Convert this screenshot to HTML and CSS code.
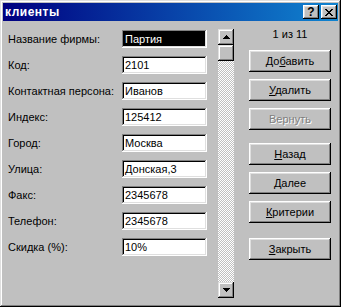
FILE: index.html
```html
<!DOCTYPE html>
<html lang="ru">
<head>
    <meta charset="UTF-8">
    <title>клиенты</title>
    <link rel="stylesheet" href="styles.css">
</head>
<body>
    <!-- Dialog window -->
    <div class="window">
        <div class="titlebar">
            <span class="title">клиенты</span>
            <div class="title-buttons">
                <button class="tbtn help">?</button>
                <button class="tbtn">
                    <svg width="8" height="7" viewBox="0 0 8 7">
                        <path d="M0 0h2v1h1v1h2v-1h1v-1h2v1h-1v1h-1v1h-1v1h1v1h1v1h1v1h-2v-1h-1v-1h-2v1h-1v1h-2v-1h1v-1h1v-1h1v-1h-1v-1h-1v-1h-1z" fill="#000"/>
                    </svg>
                </button>
            </div>
        </div>

        <div class="client">
            <!-- Record fields -->
            <div class="record">
                <span class="label">Название фирмы:</span><div class="field selected">Партия</div>
                <span class="label">Код:</span><div class="field">2101</div>
                <span class="label">Контактная персона:</span><div class="field">Иванов</div>
                <span class="label">Индекс:</span><div class="field">125412</div>
                <span class="label">Город:</span><div class="field">Москва</div>
                <span class="label">Улица:</span><div class="field">Донская,3</div>
                <span class="label">Факс:</span><div class="field">2345678</div>
                <span class="label">Телефон:</span><div class="field">2345678</div>
                <span class="label">Скидка (%):</span><div class="field">10%</div>
            </div>

            <!-- Record scrollbar -->
            <div class="scrollbar">
                <div class="sb-btn">
                    <svg width="7" height="4" viewBox="0 0 7 4"><path d="M3 0h1v1h1v1h1v1h1v1h-7v-1h1v-1h1v-1h1z" fill="#000"/></svg>
                </div>
                <div class="sb-thumb"></div>
                <div class="sb-track"></div>
                <div class="sb-btn">
                    <svg width="7" height="4" viewBox="0 0 7 4"><path d="M0 0h7v1h-1v1h-1v1h-1v1h-1v-1h-1v-1h-1v-1h-1z" fill="#000"/></svg>
                </div>
            </div>

            <!-- Actions -->
            <div class="actions">
                <div class="counter">1 из 11</div>
                <div class="group">
                    <button class="btn">До<u>б</u>авить</button>
                    <button class="btn"><u>У</u>далить</button>
                    <button class="btn disabled">Вернуть</button>
                </div>
                <div class="group">
                    <button class="btn"><u>Н</u>азад</button>
                    <button class="btn"><u>Д</u>алее</button>
                    <button class="btn"><u>К</u>ритерии</button>
                </div>
                <div class="group">
                    <button class="btn"><u>З</u>акрыть</button>
                </div>
            </div>
        </div>
    </div>
</body>
</html>
```

FILE: styles.css
```css
/* Global */
body {
    margin: 0;
    padding: 0;
    background: #c0c0c0;
    font-family: 'Liberation Sans', Arial, sans-serif;
    font-size: 11px;
    color: #000;
}

/* Window frame */
.window {
    width: 341px;
    height: 307px;
    box-sizing: border-box;
    padding: 3px;
    background: #c0c0c0;
    box-shadow: inset -1px -1px #000, inset 1px 1px #dfdfdf,
                inset -2px -2px #808080, inset 2px 2px #fff;
    display: flex;
    flex-direction: column;
}

/* Title bar */
.titlebar {
    height: 18px;
    display: flex;
    align-items: center;
    justify-content: space-between;
    padding-left: 2px;
    background: linear-gradient(to right, #000080, #1084d0);
}

.title {
    color: #fff;
    font-weight: bold;
    font-size: 12px;
    letter-spacing: 0.5px;
}

.title-buttons {
    display: flex;
    gap: 2px;
    margin-right: 1px;
}

.tbtn {
    width: 16px;
    height: 14px;
    padding: 0;
    border: none;
    background: #c0c0c0;
    display: flex;
    align-items: center;
    justify-content: center;
    box-shadow: inset -1px -1px #000, inset 1px 1px #fff,
                inset -2px -2px #808080, inset 2px 2px #dfdfdf;
}

.tbtn.help {
    font-family: 'Liberation Sans', Arial, sans-serif;
    font-weight: bold;
    font-size: 12px;
    line-height: 14px;
}

/* Client area */
.client {
    flex: 1;
    display: flex;
    align-items: flex-start;
    padding: 9px 0 0 5px;
}

.record {
    display: grid;
    grid-template-columns: 114px 85px;
    grid-auto-rows: 18px;
    row-gap: 8px;
}

.label {
    line-height: 18px;
    white-space: nowrap;
}

.field {
    background: #fff;
    line-height: 18px;
    padding-left: 3px;
    box-shadow: inset -1px -1px #fff, inset 1px 1px #808080,
                inset -2px -2px #dfdfdf, inset 2px 2px #000;
}

.field.selected {
    background: #000;
    color: #fff;
}

/* Scrollbar */
.scrollbar {
    width: 16px;
    height: 269px;
    margin: -1px 0 0 11px;
    display: flex;
    flex-direction: column;
}

.sb-btn,
.sb-thumb {
    height: 16px;
    background: #c0c0c0;
    box-shadow: inset -1px -1px #000, inset 1px 1px #dfdfdf,
                inset -2px -2px #808080, inset 2px 2px #fff;
}

.sb-btn {
    display: flex;
    align-items: center;
    justify-content: center;
}

.sb-track {
    flex: 1;
    background: repeating-conic-gradient(#fff 0% 25%, #c0c0c0 0% 50%) 0 0 / 2px 2px;
}

/* Actions column */
.actions {
    width: 82px;
    margin: -2px 0 0 15px;
    display: flex;
    flex-direction: column;
}

.counter {
    line-height: 13px;
    text-align: center;
    margin-bottom: 9px;
}

.group {
    display: flex;
    flex-direction: column;
    gap: 7px;
    margin-bottom: 13px;
}

.group + .group {
    margin-bottom: 15px;
}

.btn {
    height: 22px;
    padding: 0;
    border: none;
    background: #c0c0c0;
    font-family: 'Liberation Sans', Arial, sans-serif;
    font-size: 11px;
    color: #000;
    box-shadow: inset -1px -1px #000, inset 1px 1px #fff,
                inset -2px -2px #808080, inset 2px 2px #dfdfdf;
}

.btn.disabled {
    color: #808080;
    text-shadow: 1px 1px #fff;
}
```
